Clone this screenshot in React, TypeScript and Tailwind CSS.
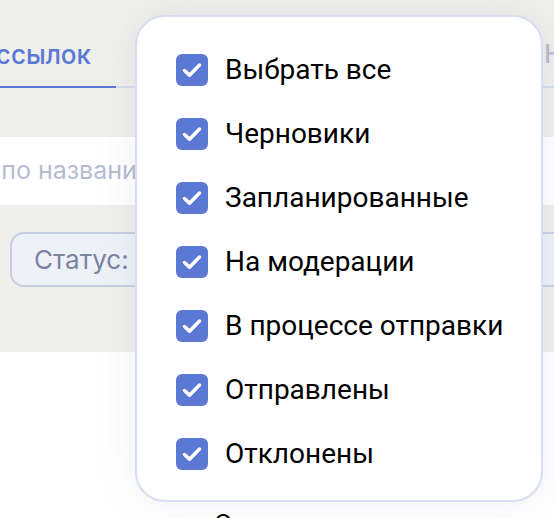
import React from "react"

const statuses = [
  "Выбрать все",
  "Черновики",
  "Запланированные",
  "На модерации",
  "В процессе отправки",
  "Отправлены",
  "Отклонены",
]

function Check() {
  return (
    <span className="flex h-[32px] w-[32px] shrink-0 rounded-[6px] bg-[#5c78d5]">
      <svg width="32" height="32" viewBox="0 0 32 32" fill="none">
        <path d="M8.5 16.5l5 4.7L23.5 11" stroke="white" strokeWidth="3.5" strokeLinecap="round" strokeLinejoin="round" />
      </svg>
    </span>
  )
}

export default function App() {
  return (
    <div className="relative h-[518px] w-[554px] overflow-hidden bg-white font-['Inter',sans-serif]">
      <div className="h-[352px] bg-[#efefec]">
        <div className="flex h-[88px] items-end border-b-2 border-[#d5dbee]">
          <div className="-mb-[2px] flex h-[88px] w-[116px] items-center justify-end overflow-hidden whitespace-nowrap border-b-2 border-[#5a78d6] pr-[25px] pt-[22px] text-[26px] font-medium text-[#5a78d6]">
            Список рассылок
          </div>
          <div className="ml-auto flex h-[88px] items-center whitespace-nowrap pt-[22px] text-[26px] font-medium text-[#b6bdd1]">
            <span className="-mr-[14px] w-[24px]">Н</span>
          </div>
        </div>
        <div className="mt-[49px] flex h-[68px] items-center overflow-hidden bg-white">
          <span className="-ml-[82px] whitespace-nowrap text-[25px] text-[#b5bcd1]">Поиск по названию</span>
        </div>
        <div className="mt-[27px] flex items-center justify-between pl-[10px]">
          <div className="flex h-[55px] w-[200px] items-center rounded-[14px] border-2 border-[#c8cee2] bg-[#eef1f7] pl-[22px] text-[26px] text-[#7a84a0]">
            Статус:
          </div>
          <div className="-mr-[60px] flex h-[55px] w-[100px] items-center rounded-[14px] border-2 border-[#c8cee2] bg-[#eef1f7] pl-[6px] text-[26px] text-[#7a84a0]">
            Д
          </div>
        </div>
      </div>
      <div className="pl-[214px] pt-[154px] text-[24px] text-black">Отмена</div>

      <div className="absolute left-[135px] top-[15px] h-[487px] w-[408px] rounded-[30px] border-2 border-[#d8ddef] bg-white pl-[39px] pt-[37px] shadow-[0_0_40px_rgba(120,130,170,0.12)]">
        <div className="flex flex-col gap-[32px] font-['Roboto',sans-serif] text-[28px] text-black">
          {statuses.map((s) => (
            <label key={s} className="flex h-[32px] items-center gap-[17px] whitespace-nowrap">
              <Check />
              <span className="leading-none">{s}</span>
            </label>
          ))}
        </div>
      </div>
    </div>
  )
}
